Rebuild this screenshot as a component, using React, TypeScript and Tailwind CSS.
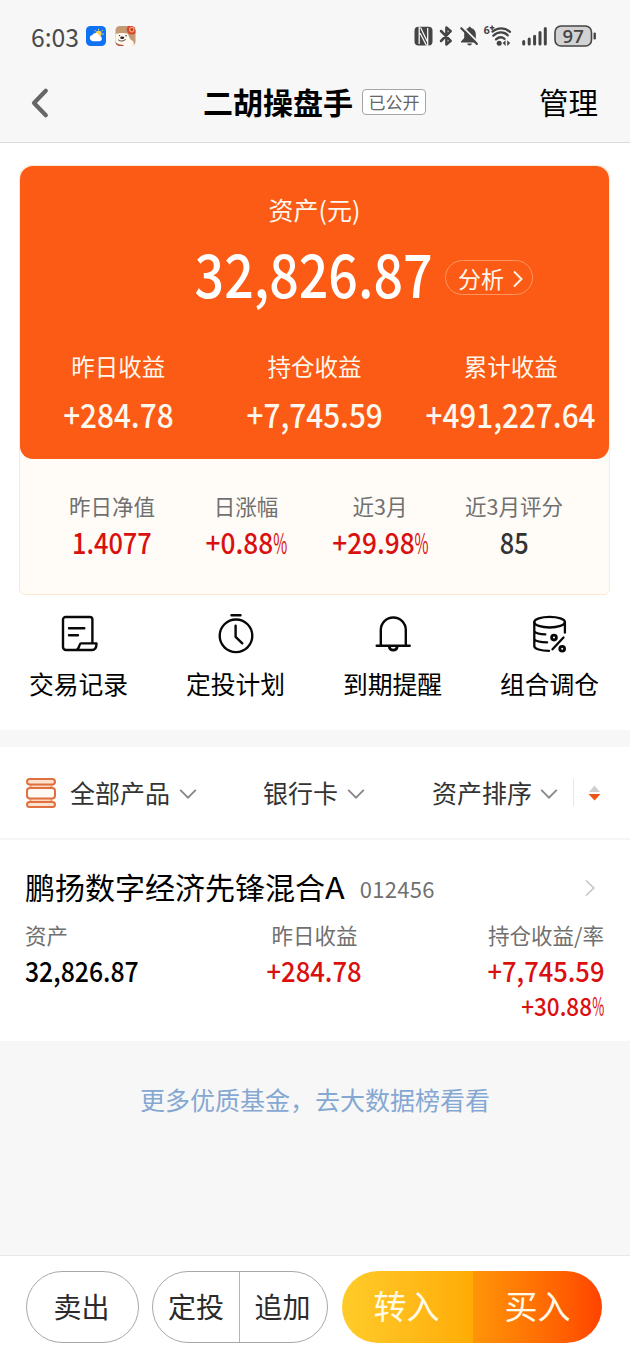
import React from "react";

function Num({ text, scale = "scale-x-[0.9]" }: { text: string; scale?: string }) {
  const percent = text.endsWith("%");
  return (
    <span className={`inline-block whitespace-nowrap font-medium ${scale}`}>
      {percent ? text.slice(0, -1) : text}
      {percent && <span className="-mx-[0.2em] inline-block scale-x-[0.58] font-normal">%</span>}
    </span>
  );
}

function Chevron({ className = "" }: { className?: string }) {
  return (
    <svg className={className} width="18" height="12" viewBox="0 0 18 12" fill="none" stroke="#888" strokeWidth="1.9">
      <path d="M1.2 1.8 9 9.6l7.8-7.8" />
    </svg>
  );
}

function WeatherIcon() {
  return (
    <svg width="20" height="20" viewBox="0 0 20 20">
      <rect width="20" height="20" rx="4.5" fill="#0d72f5" />
      <circle cx="12.6" cy="7.8" r="3" fill="#f6cf55" />
      <path d="M12.6 3.1v1M16.5 4.2l-.8.9M17.6 8h-1M9 4.4l.6.8" stroke="#f6cf55" strokeWidth="1" strokeLinecap="round" />
      <path d="M6.6 15.2a3.1 3.1 0 0 1-.4-6.1 4.1 4.1 0 0 1 7.500 1 2.600 2.600 0 0 1 .2 5.100z" fill="#fff" />
    </svg>
  );
}

function DogIcon() {
  return (
    <svg width="21" height="20" viewBox="0 0 21 20">
      <defs>
        <clipPath id="dog">
          <rect x="0.5" width="20" height="20" rx="4.500" />
        </clipPath>
      </defs>
      <g clipPath="url(#dog)">
        <rect width="21" height="20" fill="#c49a72" />
        <path d="M0 8.500C3 6.500 10 6.500 13 8l2 5 3.500 2.500L19 20H4L0 15z" fill="#fff8ef" />
        <path d="M0 15.500c2 2.600 5 3.500 9 3.500L8 20H0z" fill="#bb4c3c" />
        <circle cx="16.800" cy="3.600" r="5" fill="#d3482f" />
        <circle cx="16.800" cy="3.600" r="2.800" fill="#f6a06c" />
        <circle cx="16.800" cy="3.600" r="1.400" fill="#bd2f1f" />
        <ellipse cx="7.200" cy="11.800" rx="2" ry="1.200" fill="#2d211d" />
        <circle cx="4.600" cy="9.600" r=".7" fill="#2d211d" />
        <circle cx="11" cy="9.800" r=".7" fill="#2d211d" />
        <path d="M3 13.500c1.800 2.200 6 2 7.800-.5" stroke="#2d211d" strokeWidth=".8" fill="none" />
      </g>
    </svg>
  );
}

function StatusIcons() {
  return (
    <svg className="overflow-visible" width="184" height="24" viewBox="413 24 184 24" fill="none" stroke="#444">
      <rect x="414.500" y="26.800" width="18" height="18.600" rx="4" fill="#444" stroke="none" />
      <path d="M419.200 26.500V44M427.700 28v18M420.500 27.500l7 14.500M420 33l6.500 12.500" stroke="#f7f7f7" strokeWidth="1.300" />
      <path d="m441 31 9.700 9.800-4.300 3.700V27.500l4.300 3.700-9.700 9.800" strokeWidth="2.500" strokeLinejoin="round" strokeLinecap="round" />
      <path d="M464.200 38v-4c0-3 2-5.200 4.200-6 .2-1.700 2.400-1.700 2.600 0 3 .8 4.800 3 4.800 6v5l1.800 2.400v1H461v-1z" fill="#444" stroke="none" />
      <path d="M467.200 43.600h4.800c-.3 2.600-4.500 2.600-4.800 0z" fill="#444" stroke="none" />
      <path d="m462.200 26.400 16 16" strokeWidth="1.800" stroke="#f7f7f7" />
      <path d="m461.300 28.200 15.600 15.800" strokeWidth="2.100" strokeLinecap="round" />
      <g strokeWidth="2.300" strokeLinecap="round">
        <path d="M492.500 31.600c1.200-1 2.500-1.800 4-2.300 4.600-1.800 9.600-.8 13.500 2.500" />
        <path d="M493.300 35.700c4.500-4.400 10.700-4.400 14.400-.4" />
        <path d="M496 39.400c2.700-2.400 6-2.600 8.600-.5" />
      </g>
      <circle cx="499.200" cy="43.300" r="2.500" fill="#444" stroke="none" />
      <path d="m505.600 40.200-3 2.900 3 2.900zM507.200 40.200l3 2.900-3 2.900z" fill="#444" stroke="none" />
      <text x="483.600" y="34.300" fontSize="11" fontWeight="700" fill="#444" stroke="none" fontFamily="Roboto, sans-serif">6</text>
      <path d="M489.800 27.800h4.600M492.100 25.500v4.600" strokeWidth="1.500" />
      <g strokeWidth="3" strokeLinecap="round">
        <path d="M523.700 41.400v2.700M529.200 39v5.100M534.600 36.300v7.800M540 32.600v11.500M545.300 28.500v15.600" />
      </g>
      <rect x="555" y="26" width="36.500" height="20" rx="6" fill="#d2d2d2" strokeWidth="1.600" />
      <path d="M594.700 33.800v4.400" strokeWidth="2.400" strokeLinecap="round" />
      <text x="573.200" y="42.700" fontSize="18.500" fontWeight="600" textAnchor="middle" fill="#444" stroke="none" fontFamily="'Open Sans', sans-serif">97</text>
    </svg>
  );
}

const iconProps = {
  width: 40,
  height: 40,
  viewBox: "0 0 40 40",
  fill: "none",
  stroke: "#080808",
  strokeWidth: 2.4,
  strokeLinecap: "round" as const,
  strokeLinejoin: "round" as const,
};

const actions = [
  {
    label: "交易记录",
    icon: (
      <svg {...iconProps}>
        <path d="M17 36H7a3 3 0 0 1-3-3V5.600A2.600 2.600 0 0 1 6.600 3h24.200a2.600 2.600 0 0 1 2.600 2.600V29M10 14.300h15.300M10 21.300h9M17 36c3.300 0 3-6.600 4.900-6.600h15.600c0 4-1.500 6.600-4.500 6.600z" />
      </svg>
    ),
  },
  {
    label: "定投计划",
    icon: (
      <svg {...iconProps}>
        <circle cx="20" cy="21.800" r="16.300" />
        <path d="M15.500 1.200h9M19.600 11.800v11l6.700 6.500" />
      </svg>
    ),
  },
  {
    label: "到期提醒",
    icon: (
      <svg {...iconProps}>
        <path d="M3.700 31.800h33M7.800 31.500V16a12.500 12.500 0 0 1 25 0v15.500" />
        <path d="M16.300 32.600c.5 4.600 7.400 4.600 7.900 0" strokeWidth="2.800" />
      </svg>
    ),
  },
  {
    label: "组合调仓",
    icon: (
      <svg {...iconProps} strokeWidth={2.3}>
        <ellipse cx="19.600" cy="8.200" rx="15.300" ry="5.300" />
        <path d="M4.300 8.200v24c0 2.600 6.500 4.600 14.800 4.600M34.900 8.200v10.500M4.300 17.500c1.800 2 6 2.700 11 2.900M4.300 25.500c1.800 2 6 2.700 12.800 2.900" />
        <path d="M33.500 23.500 22.500 35.300" />
        <circle cx="24" cy="23.600" r="2.400" strokeWidth="2.800" />
        <circle cx="32.200" cy="34.700" r="2.400" strokeWidth="2.800" />
      </svg>
    ),
  },
];

const gains = [
  ["昨日收益", "+284.78"],
  ["持仓收益", "+7,745.59"],
  ["累计收益", "+491,227.64"],
];

const metrics = [
  ["昨日净值", "1.4077", "text-[#d9100f]"],
  ["日涨幅", "+0.88%", "text-[#d9100f]"],
  ["近3月", "+29.98%", "text-[#d9100f]"],
  ["近3月评分", "85", "text-[#333]"],
];

export default function App() {
  return (
    <div className="flex h-[1360px] w-[630px] flex-col overflow-hidden whitespace-nowrap bg-[#f7f7f7] font-['Noto_Sans_CJK_SC',sans-serif] text-black">
      <header className="h-[143px] shrink-0 border-b-[1.500px] border-[#dcdcdc]">
        <div className="flex h-[72px] items-center pl-[31px] pr-[33px]">
          <span className="w-[55px] text-[25.500px] leading-[34px] text-[#4a4a4a]">
            <span className="inline-block origin-left scale-x-[0.97]">6:03</span>
          </span>
          <WeatherIcon />
          <span className="ml-[8.500px]"><DogIcon /></span>
          <span className="ml-auto"><StatusIcons /></span>
        </div>
        <div className="grid h-[58px] grid-cols-[203px_1fr_auto] items-center pr-[32px]">
          <svg className="ml-[30px] mt-[4px]" width="20" height="32" viewBox="0 0 20 32" fill="none" stroke="#666" strokeWidth="4.200" strokeLinecap="round" strokeLinejoin="round">
            <path d="M15.800 3.800 4 16l11.800 12.200" />
          </svg>
          <div className="flex items-center">
            <h1 className="text-[30px] font-bold leading-[42px]">二胡操盘手</h1>
            <span className="ml-[9px] mt-[2px] flex h-[26px] w-[64px] items-center justify-center rounded-[4px] border border-[#a5a5a5] bg-white pb-[2px] text-[17px] leading-none text-[#666]">已公开</span>
          </div>
          <span className="text-[29.500px] leading-[42px]">管理</span>
        </div>
      </header>

      <main className="h-[587px] shrink-0 bg-white pt-[22px]">
        <section className="ml-[19px] h-[430px] w-[591px] rounded-t-[12px] rounded-b-[6px] border border-[#fbe9d2] bg-[#fffcf7]">
          <div className="h-[293px] rounded-[13px] bg-[#fb5b14] pt-[25px] text-[#fff8ee]">
            <div className="text-center text-[25px] leading-[37px]">资产(元)</div>
            <div className="mt-[14px] flex h-[60px] items-center">
              <div className="w-[175px] shrink-0" />
              <div className="flex w-[238px] shrink-0 justify-center text-[60px] leading-[60px] text-white">
                <Num text="32,826.87" scale="scale-x-[0.865]" />
              </div>
              <div className="ml-[12px] mt-[11px]">
                <span className="flex h-[35px] w-[88px] items-center rounded-full border border-[#ff9561] pl-[12px] text-[23px] leading-[30px]">
                  分析
                  <svg className="ml-[8px] mt-[2px]" width="12" height="18" viewBox="0 0 12 18" fill="none" stroke="#fff3e4" strokeWidth="2">
                    <path d="m2 1.500 7.500 7.500L2 16.500" />
                  </svg>
                </span>
              </div>
            </div>
            <div className="mt-[49px] grid grid-cols-3 text-center">
              {gains.map(([label, value]) => (
                <div key={label} className="flex flex-col items-center">
                  <span className="text-[23.500px] leading-[30px]">{label}</span>
                  <span className="mt-[13px] text-[33px] leading-[40px]"><Num text={value} /></span>
                </div>
              ))}
            </div>
          </div>
          <div className="grid grid-cols-[134px_134px_134px_134px] pl-[25px] pt-[32px] text-center">
            {metrics.map(([label, value, color]) => (
              <div key={label} className="flex flex-col items-center">
                <span className="text-[21.500px] leading-[30px] text-[#707070]">{label}</span>
                <span className={`mt-[3px] text-[28.500px] leading-[36px] ${color}`}>
                  <Num text={value} scale={value.startsWith("+") ? "scale-x-[0.92]" : "scale-x-[0.89]"} />
                </span>
              </div>
            ))}
          </div>
        </section>
        <nav className="mt-[19px] grid w-[628px] grid-cols-4">
          {actions.map(({ label, icon }) => (
            <div key={label} className="flex flex-col items-center">
              {icon}
              <span className="mt-[11px] text-[24.800px] leading-[36px]">{label}</span>
            </div>
          ))}
        </nav>
      </main>

      <div className="mt-[17px] flex h-[93px] shrink-0 items-center border-b-2 border-[#f5f5f5] bg-white pl-[25px] text-[25px] leading-[36px] text-[#333]">
        <svg width="32" height="32" viewBox="0 0 32 32" stroke="#e0703f" strokeWidth="2">
          <path d="M5.500 7h21v4h-21zM5.500 21h21v4h-21z" fill="#fbd9bd" stroke="#efa47b" />
          <rect x="2" y="2" width="28" height="5.500" rx="2.700" fill="#fce3cf" />
          <rect x="2" y="11" width="28" height="10.500" rx="3" fill="#fffaf4" />
          <rect x="2" y="25" width="28" height="5" rx="2.500" fill="#fce3cf" />
        </svg>
        <span className="-mt-[2px] ml-[13px]">全部产品</span>
        <Chevron className="ml-[9px] mt-[2px]" />
        <span className="-mt-[2px] ml-[66px]">银行卡</span>
        <Chevron className="ml-[9px] mt-[2px]" />
        <span className="-mt-[2px] ml-[67px]">资产排序</span>
        <Chevron className="ml-[8px] mt-[2px]" />
        <span className="ml-[15px] h-[27px] w-px bg-[#e6e6e6]" />
        <svg className="ml-[14px]" width="13" height="16" viewBox="0 0 13 16">
          <path d="M6.500.5 12 7H1z" fill="#cfcfcf" />
          <path d="M.5 9h12l-6 6.500z" fill="#ee5516" />
        </svg>
      </div>

      <section className="h-[201px] shrink-0 bg-white pl-[25px] pr-[26px] pt-[24px]">
        <div className="flex h-[44px] items-center">
          <h2 className="text-[30px] leading-[44px]">鹏扬数字经济先锋混合<span className="inline-block origin-left scale-x-[1.08]">A</span></h2>
          <span className="ml-[16.500px] mt-[3px] text-[22px] leading-[44px] tracking-[0.3px] text-[#707070]">012456</span>
          <svg className="ml-auto mr-[8px] mt-[4px]" width="12" height="18" viewBox="0 0 12 18" fill="none" stroke="#c4c4c4" strokeWidth="1.600">
            <path d="m2 1.500 7.800 7.500L2 16.500" />
          </svg>
        </div>
        <div className="mt-[12px] grid grid-cols-3">
          <div className="flex flex-col items-start">
            <span className="text-[21.500px] leading-[30px] text-[#707070]">资产</span>
            <span className="mt-[2px] text-[28px] leading-[36px]"><Num text="32,826.87" scale="origin-left scale-x-[0.885]" /></span>
          </div>
          <div className="flex flex-col items-center">
            <span className="text-[21.500px] leading-[30px] text-[#707070]">昨日收益</span>
            <span className="mt-[2px] text-[28px] leading-[36px] text-[#d9100f]"><Num text="+284.78" scale="scale-x-[0.915]" /></span>
          </div>
          <div className="flex flex-col items-end">
            <span className="text-[21.500px] leading-[30px] text-[#707070]">持仓收益/率</span>
            <span className="mt-[2px] text-[28px] leading-[36px] text-[#d9100f]"><Num text="+7,745.59" scale="origin-right scale-x-[0.91]" /></span>
            <span className="mt-[2px] text-[25px] leading-[30px] text-[#d9100f]"><Num text="+30.88%" scale="origin-right scale-x-[0.9]" /></span>
          </div>
        </div>
      </section>

      <div className="flex-1 pt-[40px] text-center text-[25px] leading-[36px] text-[#85a8d2]">更多优质基金，去大数据榜看看</div>

      <footer className="flex h-[105px] shrink-0 border-t border-[#e8e8e8] bg-white pl-[26px] pt-[15px] text-[28px] leading-[40px] text-[#2b2b2b]">
        <button className="flex h-[72px] w-[113px] items-center justify-center rounded-full border border-[#a8a8a8] pb-[2px] pr-[2px]">卖出</button>
        <div className="ml-[13px] flex h-[72px] w-[176px] rounded-full border border-[#a8a8a8]">
          <button className="flex w-[87px] items-center justify-center border-r border-[#b5b5b5] pb-[2px]">定投</button>
          <button className="flex flex-1 items-center justify-center pb-[2px] pr-[2px]">追加</button>
        </div>
        <div className="ml-[14px] flex h-[72px] w-[260px] overflow-hidden rounded-full text-[33px] text-[#fffbe9]">
          <button className="flex flex-1 items-center justify-center bg-linear-to-r from-[#ffcb28] to-[#ffac04] pb-[4px] pr-[2px]">转入</button>
          <button className="flex flex-1 items-center justify-center bg-linear-to-r from-[#ff9408] to-[#ff4200] pb-[4px]">买入</button>
        </div>
      </footer>
    </div>
  );
}
